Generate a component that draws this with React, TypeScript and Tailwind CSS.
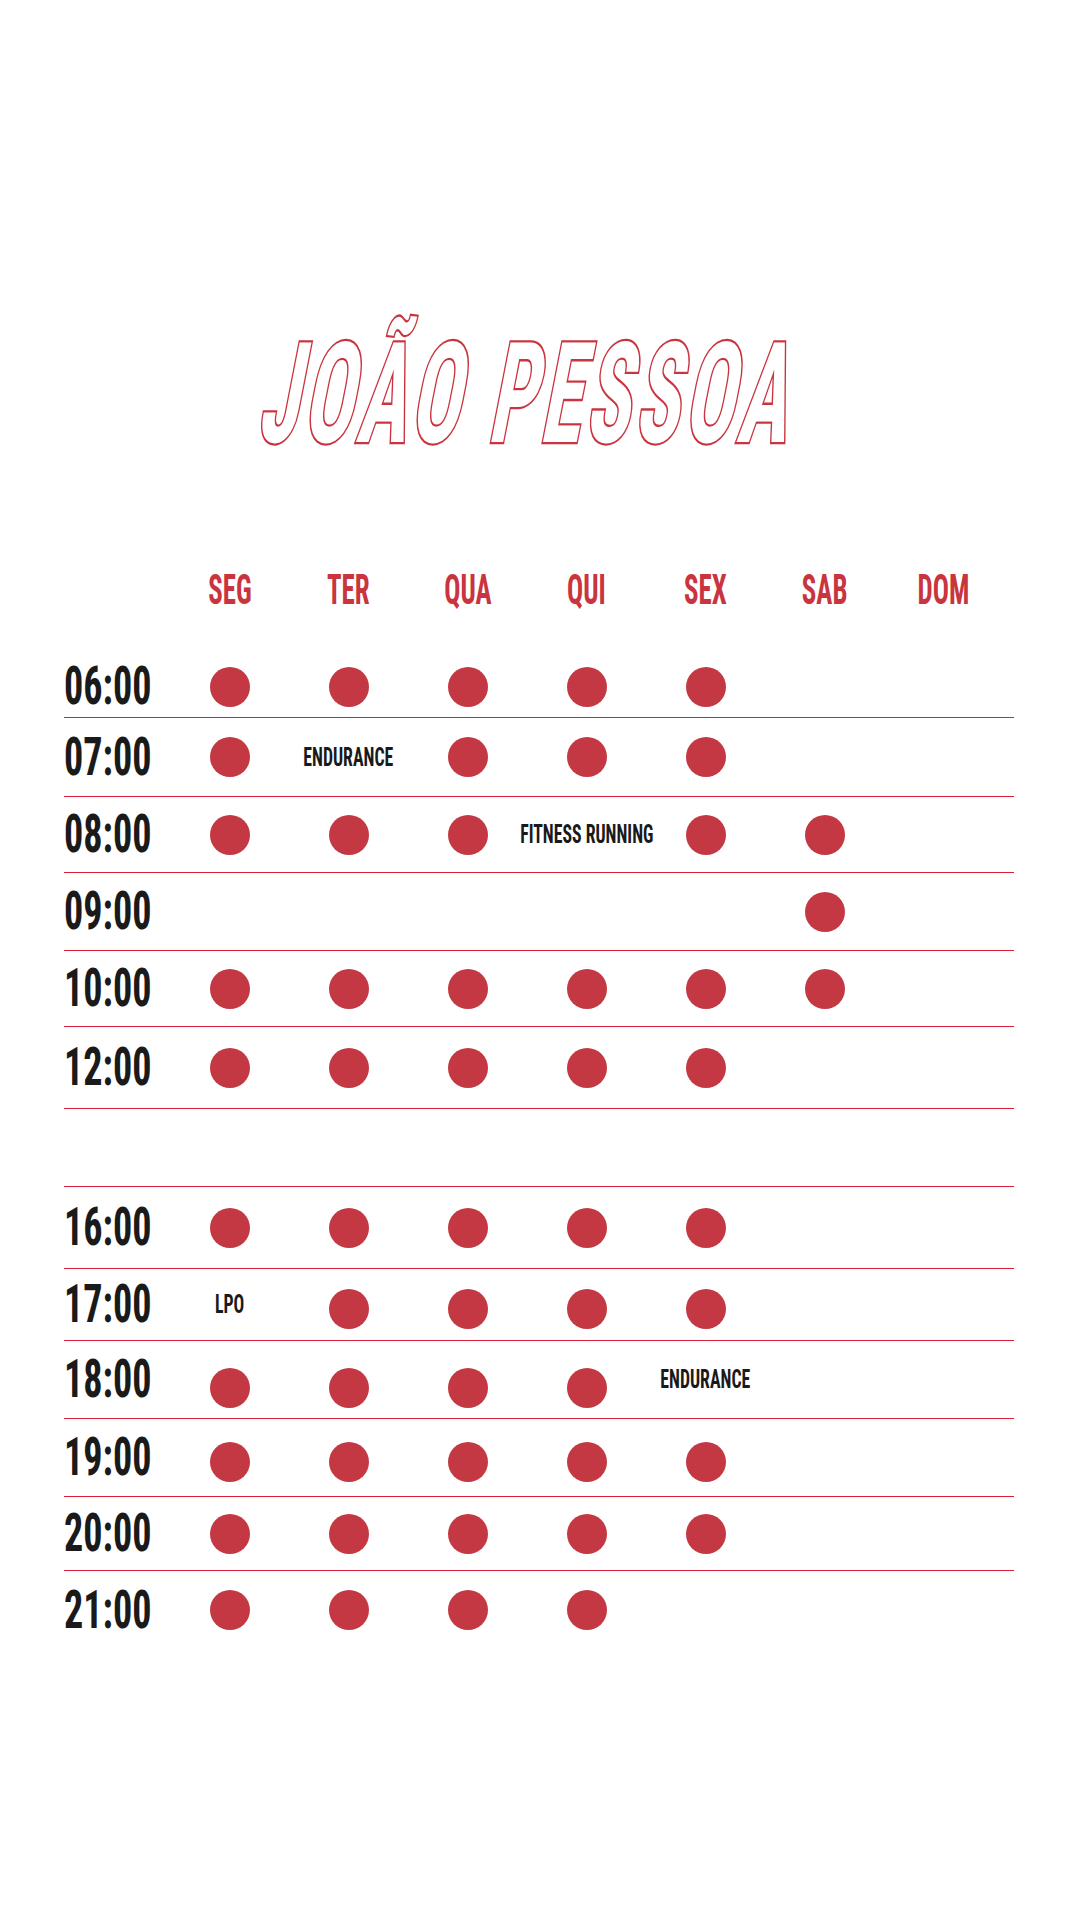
const DAYS = ['SEG', 'TER', 'QUA', 'QUI', 'SEX', 'SAB', 'DOM'];

// each cell: 1 = aula (dot), string = nome da aula, 0 = vazio
type Cell = 0 | 1 | string;
type Row = { time: string; h: string; cells: Cell[]; dot?: string; last?: boolean } | { gap: true };

const ROWS: Row[] = [
  { time: '06:00', h: 'h-[62px]', cells: [1, 1, 1, 1, 1, 0, 0] },
  { time: '07:00', h: 'h-[79px]', cells: [1, 'ENDURANCE', 1, 1, 1, 0, 0] },
  { time: '08:00', h: 'h-[76px]', cells: [1, 1, 1, 'FITNESS RUNNING', 1, 1, 0] },
  { time: '09:00', h: 'h-[78px]', cells: [0, 0, 0, 0, 0, 1, 0] },
  { time: '10:00', h: 'h-[76px]', cells: [1, 1, 1, 1, 1, 1, 0] },
  { time: '12:00', h: 'h-[82px]', cells: [1, 1, 1, 1, 1, 0, 0] },
  { gap: true },
  { time: '16:00', h: 'h-[82px]', cells: [1, 1, 1, 1, 1, 0, 0] },
  { time: '17:00', h: 'h-[72px]', cells: ['LPO', 1, 1, 1, 1, 0, 0], dot: 'mt-2' },
  { time: '18:00', h: 'h-[78px]', cells: [1, 1, 1, 1, 'ENDURANCE', 0, 0], dot: 'mt-4' },
  { time: '19:00', h: 'h-[78px]', cells: [1, 1, 1, 1, 1, 0, 0], dot: 'mt-2' },
  { time: '20:00', h: 'h-[74px]', cells: [1, 1, 1, 1, 1, 0, 0] },
  { time: '21:00', h: 'h-[78px]', cells: [1, 1, 1, 1, 0, 0, 0], last: true },
];

const font = "font-['Roboto_Condensed','Roboto','Liberation_Sans',sans-serif]";

export default function App() {
  return (
    <div className="min-h-[1920px] w-[1080px] bg-white">
      {/* Título (contorno: traço por baixo, preenchimento branco por cima; esticado na vertical a partir da linha de base) */}
      <div className="pt-[373px] pl-[256px]">
        <h1
          className={`${font} inline-block h-[83px] whitespace-nowrap text-[82.6px] font-bold leading-none tracking-[4.7px] text-white [-webkit-text-stroke:2.7px_#c9343f] [paint-order:stroke_fill] [transform-origin:0_69.5px] [transform:skewX(-11deg)_scaleY(1.695)]`}
        >
          JOÃO PESSOA
        </h1>
      </div>

      <div className="ml-[64px] mt-[101px] w-[950px]">
        {/* Dias */}
        <div className="grid h-[66px] grid-cols-[106px_repeat(7,119px)] items-center">
          <div />
          {DAYS.map((d) => (
            <div key={d} className="flex justify-center">
              <span className={`${font} inline-block scale-x-[0.64] text-[42px] font-bold leading-none text-[#c9343f]`}>
                {d}
              </span>
            </div>
          ))}
        </div>

        <div className="mt-[33px]">
          {ROWS.map((row, i) => {
            if ('gap' in row) {
              return <div key={i} className="h-[78px] border-b border-[#d8203a]" />;
            }
            return (
              <div
                key={row.time}
                className={`grid grid-cols-[106px_repeat(7,119px)] items-center ${row.h} ${
                  row.last ? '' : 'border-b border-[#d8203a]'
                }`}
              >
                <div>
                  <span
                    className={`${font} inline-block origin-left scale-x-[0.72] text-[53px] font-bold leading-none text-[#1a1a1a]`}
                  >
                    {row.time}
                  </span>
                </div>
                {row.cells.map((c, j) => (
                  <div key={j} className="flex justify-center">
                    {c === 1 && <div className={`h-10 w-10 rounded-full bg-[#c43843] ${row.dot ?? ''}`} />}
                    {typeof c === 'string' && (
                      <span
                        className={`${font} inline-block scale-x-[0.71] whitespace-nowrap text-[25px] font-bold leading-none text-[#1a1a1a]`}
                      >
                        {c}
                      </span>
                    )}
                  </div>
                ))}
              </div>
            );
          })}
        </div>
      </div>
    </div>
  );
}
